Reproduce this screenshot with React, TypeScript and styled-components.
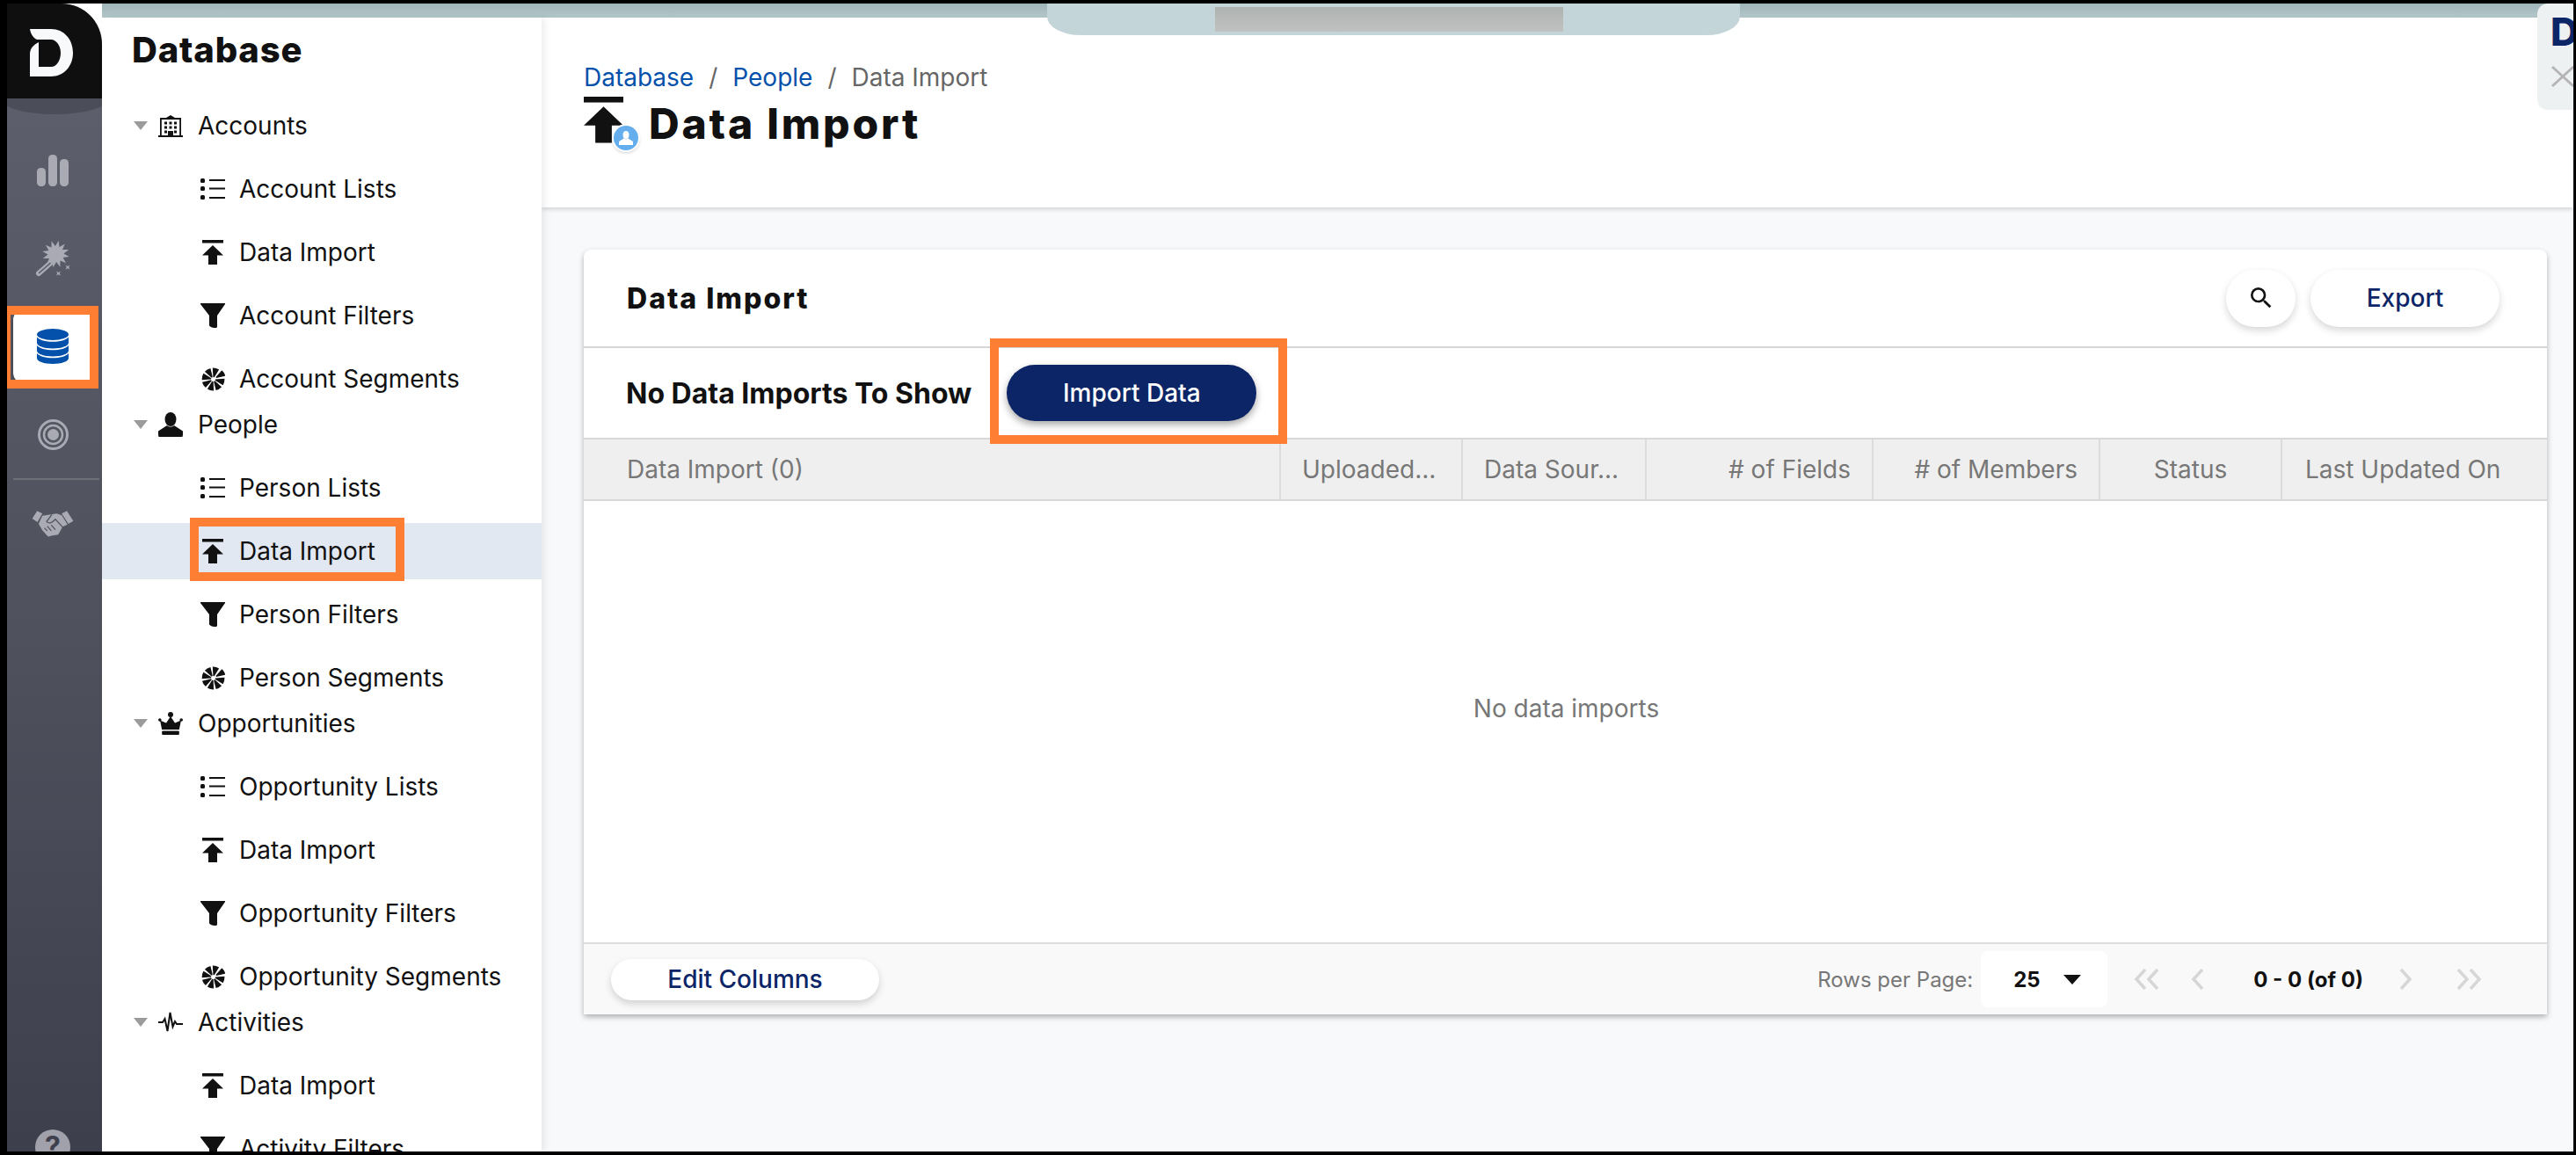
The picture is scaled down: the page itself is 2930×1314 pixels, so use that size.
import React from 'react';
import styled, { createGlobalStyle } from 'styled-components';
import { MdSearch } from 'react-icons/md';

const GlobalStyle = createGlobalStyle`
  html, body {
    margin: 0;
    height: 100%;
    background: #000;
    overflow: hidden;
  }
  #root {
    height: 100%;
  }
  * {
    box-sizing: border-box;
  }
`;

const Frame = styled.div`
  height: 1314px;
  padding: 4px 3px 4px 8px;
  display: flex;
  font-family: Inter, 'Liberation Sans', sans-serif;
  color: #111;
  background: #000;
`;

const Rail = styled.nav`
  width: 108px;
  flex-shrink: 0;
  display: flex;
  flex-direction: column;
  background: #fff;
`;

const LogoBlock = styled.div`
  height: 108px;
  flex-shrink: 0;
  background: #0f0f0f;
  border-top-right-radius: 46px;
  display: flex;
  align-items: center;
  justify-content: center;
  padding: 4px 6px 0 0;
  position: relative;
  z-index: 1;
`;

const RailBody = styled.div`
  flex: 1;
  min-height: 0;
  overflow: hidden;
  position: relative;
  display: flex;
  flex-direction: column;
  padding: 32px 4px 0 0;
  background: linear-gradient(180deg, #5c5f6b 0%, #4f515d 50%, #3e3f4d 100%);

  &::before {
    content: '';
    position: absolute;
    left: -10px;
    right: -10px;
    top: -22px;
    height: 40px;
    border-radius: 50%;
    background: #4b4e59;
  }
`;

const RailItem = styled.div<{ $active?: boolean }>`
  height: 100px;
  flex-shrink: 0;
  position: relative;
  display: flex;
  align-items: center;
  justify-content: center;
  color: #a9aab3;

  ${(p) =>
    p.$active &&
    `
    &::before {
      content: '';
      position: absolute;
      left: 7px;
      right: 4px;
      top: 8px;
      bottom: 8px;
      background: #fff;
      border-radius: 12px;
      box-shadow: 0 3px 4px rgba(0, 0, 0, 0.35);
    }
    & > svg {
      position: relative;
    }
  `}
`;

const RailDivider = styled.div`
  height: 2px;
  flex-shrink: 0;
  margin: 0 -1px 0 7px;
  background: #6d6f79;
`;

const HelpBubble = styled.div`
  width: 40px;
  height: 40px;
  flex-shrink: 0;
  margin: auto auto -15px;
  border-radius: 50%;
  background: #a0a1ab;
  color: #3f404d;
  font-size: 32px;
  font-weight: 700;
  line-height: 40px;
  text-align: center;
`;

const OrangeFrame = styled.span`
  position: absolute;
  border: 10px solid #fe7f34;
  pointer-events: none;
  z-index: 3;
`;

const RailMark = styled(OrangeFrame)`
  left: -6px;
  top: 4px;
  width: 110px;
  height: 94px;
`;

const RowMark = styled(OrangeFrame)`
  left: 100px;
  top: -6px;
  width: 244px;
  height: 72px;
`;

const ButtonMark = styled(OrangeFrame)`
  left: -19px;
  top: -30px;
  width: 338px;
  height: 120px;
`;

const RightSide = styled.div`
  flex: 1;
  min-width: 0;
  display: flex;
  flex-direction: column;
  position: relative;
`;

const TopStrip = styled.div`
  height: 16px;
  flex-shrink: 0;
  background: linear-gradient(180deg, #9fb4b9 0%, #b4c8cb 100%);
`;

const Notch = styled.div`
  position: absolute;
  left: 1075px;
  top: 0;
  width: 788px;
  height: 36px;
  background: #c3d5d8;
  border-radius: 0 0 38px 38px / 0 0 21px 21px;
  z-index: 2;
`;

const NotchBlur = styled.div`
  position: absolute;
  left: 191px;
  top: 4px;
  width: 396px;
  height: 28px;
  background: linear-gradient(180deg, #aeb2b1 0%, #c0c2c1 100%);
`;

const SideTab = styled.div`
  position: absolute;
  right: 0;
  top: 0;
  width: 41px;
  height: 121px;
  overflow: hidden;
  background: #eef1f2;
  border-radius: 12px 0 0 12px;
  padding: 10px 0 0 15px;
  z-index: 2;
  color: #b5b5b5;
`;

const SideTabLetter = styled.div`
  font-size: 44px;
  line-height: 44px;
  font-weight: 800;
  color: #0c2566;
  margin-bottom: 16px;
`;

const Columns = styled.div`
  flex: 1;
  min-height: 0;
  display: flex;
`;

const Sidebar = styled.aside`
  width: 500px;
  flex-shrink: 0;
  overflow: hidden;
  background: #fff;
  padding-top: 16px;
  box-shadow: 3px 0 8px rgba(0, 0, 0, 0.08);
  position: relative;
  z-index: 1;
`;

const SidebarTitle = styled.h2`
  margin: 0 0 49px 34px;
  font-size: 40px;
  line-height: 42px;
  font-weight: 800;
  letter-spacing: 0.8px;
`;

const Tree = styled.div`
  display: flex;
  flex-direction: column;
  gap: 4px;
`;

const GroupHeader = styled.div`
  height: 32px;
  margin-bottom: 24px;
  padding-left: 36px;
  display: flex;
  align-items: center;
  font-size: 28px;
  white-space: nowrap;

  & > svg:nth-child(2) {
    margin: 0 17px 0 12px;
  }
`;

const ChildList = styled.div`
  display: flex;
  flex-direction: column;
  gap: 8px;
`;

const ChildRow = styled.div<{ $selected?: boolean }>`
  height: 64px;
  padding-left: 112px;
  display: flex;
  align-items: center;
  gap: 16px;
  position: relative;
  font-size: 28px;
  white-space: nowrap;
  background: ${(p) => (p.$selected ? '#e1e8f2' : 'transparent')};
`;

const ChildIcon = styled.span`
  width: 28px;
  flex-shrink: 0;
  display: flex;
  justify-content: center;
`;

const Main = styled.main`
  flex: 1;
  min-width: 0;
  display: flex;
  flex-direction: column;
  background: #f8f9fb;
`;

const PageHeader = styled.header`
  height: 216px;
  flex-shrink: 0;
  background: #fff;
  padding: 48px 48px 0;
  box-shadow: 0 2px 5px rgba(0, 0, 0, 0.16);
`;

const Breadcrumbs = styled.div`
  display: flex;
  align-items: center;
  height: 40px;
  gap: 17px;
  font-size: 28px;
  color: #666;
`;

const Crumb = styled.a`
  color: #0451ab;
`;

const TitleRow = styled.div`
  display: flex;
  align-items: center;
  height: 60px;
  margin-top: -3px;
  gap: 14px;
`;

const TitleIconWrap = styled.div`
  position: relative;
  width: 60px;
  height: 55px;
  flex-shrink: 0;
  margin-top: 5px;
`;

const TitleBadge = styled.span`
  position: absolute;
  left: 34px;
  top: 33px;
  width: 28px;
  height: 28px;
  border-radius: 50%;
  background: #64aeee;
  box-shadow: 0 0 0 2px #fff, 0 2px 4px rgba(0, 0, 0, 0.3);
  display: flex;
  align-items: center;
  justify-content: center;
`;

const PageTitle = styled.h1`
  margin: 10px 0 0;
  font-size: 48px;
  font-weight: 800;
  letter-spacing: 2.800px;
  white-space: nowrap;
`;

const Content = styled.div`
  flex: 1;
  padding: 48px 30px 0 48px;
`;

const Card = styled.section`
  height: 870px;
  display: flex;
  flex-direction: column;
  background: #fff;
  border-radius: 8px 8px 2px 2px;
  box-shadow: 0 3px 6px rgba(0, 0, 0, 0.3);
`;

const CardTop = styled.div`
  height: 112px;
  flex-shrink: 0;
  padding: 0 54px 0 49px;
  display: flex;
  align-items: center;
  border-bottom: 2px solid #d6d6d6;
`;

const CardTitle = styled.h3`
  margin: 0 auto 0 0;
  font-size: 32px;
  font-weight: 800;
  letter-spacing: 2px;
`;

const PillButton = styled.button`
  height: 65px;
  border: none;
  border-radius: 33px;
  background: #fff;
  color: #0c2566;
  font-family: inherit;
  font-size: 28px;
  font-weight: 500;
  box-shadow: 0 4px 9px rgba(0, 0, 0, 0.16);
  display: flex;
  align-items: center;
  justify-content: center;
`;

const SearchButton = styled(PillButton)`
  width: 79px;
  margin-right: 17px;
  color: #111;
`;

const ExportButton = styled(PillButton)`
  width: 215px;
`;

const EmptyRow = styled.div`
  height: 102px;
  flex-shrink: 0;
  padding-left: 48px;
  display: flex;
  align-items: center;
  gap: 40px;
`;

const EmptyTitle = styled.div`
  font-size: 32px;
  font-weight: 700;
  white-space: nowrap;
`;

const ButtonSlot = styled.div`
  position: relative;
`;

const ImportButton = styled.button`
  width: 284px;
  height: 64px;
  border: none;
  border-radius: 32px;
  background: #0c2566;
  color: #fff;
  font-family: inherit;
  font-size: 28px;
  font-weight: 500;
  box-shadow: 0 4px 8px rgba(0, 0, 0, 0.35);
`;

const TableHead = styled.div`
  height: 72px;
  flex-shrink: 0;
  display: grid;
  grid-template-columns: 791px 207px 209px 258px 258px 207px 303px;
  background: #efefef;
  border-top: 2px solid #d8d8d8;
  border-bottom: 2px solid #d8d8d8;
`;

const HeadCell = styled.div<{ $align?: string; $pad?: number }>`
  display: flex;
  align-items: center;
  justify-content: ${(p) => p.$align || 'flex-start'};
  padding: 0 24px 0 ${(p) => p.$pad ?? 24}px;
  font-size: 28px;
  color: #777;
  white-space: nowrap;
  border-left: 2px solid #dcdcdc;

  &:first-child {
    border-left: none;
  }
`;

const TableBody = styled.div`
  flex: 1;
  display: flex;
  align-items: center;
  justify-content: center;
  padding: 0 0 30px 2px;
  font-size: 28px;
  color: #777;
`;

const CardFooter = styled.div`
  height: 82px;
  flex-shrink: 0;
  display: flex;
  align-items: center;
  padding: 0 74px 0 31px;
  background: #f9f9f9;
  border-top: 2px solid #ddd;
`;

const EditColumns = styled(PillButton)`
  width: 305px;
  height: 47px;
  margin-right: auto;
`;

const RowsLabel = styled.span`
  font-size: 24px;
  color: #777;
  white-space: nowrap;
`;

const RowsSelect = styled.div`
  width: 144px;
  height: 64px;
  margin-left: 9px;
  padding: 0 30px 0 37px;
  display: flex;
  align-items: center;
  justify-content: space-between;
  background: #fff;
  border-radius: 8px;
  font-size: 24px;
  font-weight: 700;
`;

const PageArrow = styled.svg<{ $gap: number }>`
  margin-left: ${(p) => p.$gap}px;
  flex-shrink: 0;
`;

const PageCount = styled.span<{ $gap: number }>`
  margin-left: ${(p) => p.$gap}px;
  font-size: 24px;
  font-weight: 700;
  white-space: nowrap;
`;

/* ---- drawings ---- */

const LogoMark = () => (
  <svg width="50" height="56" viewBox="36 28 50 56" fill="#f8f9fb">
    <path d="M36 29H60C75 29 85 41 85 56C85 72 74 83 60 83H36V58C36 51 40 47 46 44V72H60C67 72 71 64 71 56C71 48 66 41 60 41H44C40 39 37 35 36 29Z" />
  </svg>
);

const ChartIcon = () => (
  <svg width="36" height="36" viewBox="0 0 36 36" fill="currentColor">
    <rect x="0" y="15" width="10" height="21" rx="4.500" />
    <rect x="13" y="0" width="10" height="36" rx="4.500" />
    <rect x="26" y="5" width="10" height="31" rx="4.500" />
  </svg>
);

const starPoints = Array.from({ length: 24 }, (_, i) => {
  const r = i % 2 === 0 ? 15.500 : 9;
  const a = (i * Math.PI) / 12 + 0.2;
  return `${(23.500 + r * Math.sin(a)).toFixed(1)},${(15 - r * Math.cos(a)).toFixed(1)}`;
}).join(' ');

const WandIcon = () => (
  <svg width="40" height="41" viewBox="0 0 40 41" fill="currentColor">
    <polygon points={starPoints} />
    <path d="M4 37L20 23" stroke="currentColor" strokeWidth="6" strokeLinecap="round" />
    <path d="M4.500 36.500L17 25.500" stroke="#585b66" strokeWidth="1.500" strokeLinecap="round" />
    <path d="M24 34.500L26.500 36L29 34.500L27.700 37L29 39.500L26.500 38.200L24 39.500L25.300 37ZM34.500 27.500L37 29L39.500 27.500L38.200 30L39.500 32.500L37 31.200L34.500 32.500L35.800 30Z" />
  </svg>
);

const DatabaseIcon = () => (
  <svg width="36" height="40" viewBox="0 0 36 40" fill="#0451ab">
    <ellipse cx="18" cy="6.500" rx="18" ry="6.500" />
    <path d="M0 9.500C3 13 10 14.800 18 14.800C26 14.800 33 13 36 9.500V16C36 19.600 28 22.500 18 22.500C8 22.500 0 19.600 0 16Z" />
    <path d="M0 19C3 22.500 10 24.300 18 24.300C26 24.300 33 22.500 36 19V25C36 28.600 28 31.500 18 31.500C8 31.500 0 28.600 0 25Z" />
    <path d="M0 28C3 31.500 10 33.300 18 33.300C26 33.300 33 31.500 36 28V33.500C36 37.100 28 40 18 40C8 40 0 37.100 0 33.500Z" />
  </svg>
);

const TargetIcon = () => (
  <svg width="35" height="35" viewBox="0 0 35 35" fill="none" stroke="currentColor">
    <circle cx="17.500" cy="17.500" r="16" strokeWidth="3" />
    <circle cx="17.500" cy="17.500" r="10.500" strokeWidth="2.500" />
    <circle cx="17.500" cy="17.500" r="6.500" fill="currentColor" stroke="none" />
  </svg>
);

const HandshakeIcon = () => (
  <svg width="48" height="32" viewBox="18 30 146 96" fill="currentColor">
    <path d="M20 60L37 33L55 42L38 72Z" />
    <path d="M122 42L140 33L162 68L145 78Z" />
    <path d="M55 50L85 45L105 42L122 48L142 80L125 88L110 115L90 118L75 122L55 100L42 78Z" />
    <path d="M88 46L70 70C76 78 88 76 100 62L128 92M62 92L72 102M72 86L86 102M86 82L100 98" fill="none" stroke="#52545f" strokeWidth="4" />
  </svg>
);

const Caret = () => (
  <svg width="16" height="10" viewBox="0 0 16 10" fill="#9b9b9b">
    <path d="M0 0H16L8 10Z" />
  </svg>
);

const BuildingIcon = () => (
  <svg width="28" height="25" viewBox="0 0 28 25" fill="#111">
    <path d="M2 3H9L14 0L19 3H26V23H28V25H0V23H2ZM3.800 5V23H11V18H17V23H24.200V5Z" />
    <path d="M7 7.500h3v3H7zM12.500 7.500h3v3h-3zM18 7.500h3v3h-3zM7 12.500h3v3H7zM12.500 12.500h3v3h-3zM18 12.500h3v3h-3zM7 17.500h3v3H7zM18 17.500h3v3h-3z" />
  </svg>
);

const PersonIcon = () => (
  <svg width="28" height="28" viewBox="0 0 28 28" fill="#111">
    <ellipse cx="14" cy="8" rx="6.500" ry="8" />
    <path d="M10 15L0 21.500C-.3 24 0 26 .5 28H27.500C28 26 28.300 24 28 21.500L18 15C16 17 12 17 10 15Z" />
  </svg>
);

const CrownIcon = () => (
  <svg width="28" height="26" viewBox="0 0 28 26" fill="#111">
    <circle cx="14" cy="3" r="3" />
    <circle cx="1.800" cy="9" r="1.800" />
    <circle cx="26.200" cy="9" r="1.800" />
    <path d="M14 5L19 12.500L26 9.500L23.800 20H4.200L2 9.500L9 12.500Z" />
    <rect x="4.200" y="21.500" width="19.600" height="4.500" rx="1" />
  </svg>
);

const PulseIcon = () => (
  <svg width="28" height="24" viewBox="0 0 28 24" fill="none" stroke="#111" strokeWidth="2">
    <path d="M0 12H5L7.500 8L10.500 22L13.500 1L16.500 17L19 11L21 14H28" />
  </svg>
);

const ListIcon = () => (
  <svg width="28" height="24" viewBox="0 0 28 24" fill="#111">
    <rect x="0" y="0" width="5" height="5" rx="1.500" />
    <rect x="0" y="9" width="5" height="5" rx="1.500" />
    <rect x="0" y="19" width="5" height="5" rx="1.500" />
    <rect x="10" y="1" width="18" height="2" />
    <rect x="10" y="10.500" width="18" height="2" />
    <rect x="10" y="21" width="18" height="2" />
  </svg>
);

const ImportIcon = ({ size = 24 }: { size?: number }) => (
  <svg width={size} height={(size * 28) / 24} viewBox="0 0 24 28" fill="#111">
    <rect x="0" y="0" width="24" height="3.500" />
    <path d="M12 6L24 17.500H17V28H7V17.500H0Z" />
  </svg>
);

const FilterIcon = () => (
  <svg width="28" height="28" viewBox="0 0 28 28" fill="#111">
    <path d="M0 0H28V1L19 14V26.500C19 27.800 18 28 17 28C13 28 10 26.500 10 25V14L0 1Z" />
  </svg>
);

const SegmentIcon = () => {
  const spokes = [0, 45, 90, 135, 180, 225, 270, 315];
  return (
    <svg width="27" height="27" viewBox="-14 -14 28 28" fill="#111">
      {spokes.map((deg) => (
        <path
          key={deg}
          d="M-.7 -2.500L-3.900 -12.800A13.500 13.500 0 0 1 3.900 -12.800L.7 -2.500Z"
          transform={`rotate(${deg + 14})${deg === 45 ? ' translate(0 -1.500)' : ''}`}
        />
      ))}
    </svg>
  );
};

const ItemIcons: Record<string, React.ReactNode> = {
  list: <ListIcon />,
  import: <ImportIcon />,
  filter: <FilterIcon />,
  segment: <SegmentIcon />,
};

const Chevron = ({ gap, double, flip }: { gap: number; double?: boolean; flip?: boolean }) => (
  <PageArrow $gap={gap} width={double ? 29 : 15} height="24" viewBox={double ? '0 0 29 24' : '0 0 15 24'} fill="none" stroke="#d6d6d6" strokeWidth="3.500">
    <g transform={flip ? `translate(${double ? 29 : 15} 0) scale(-1 1)` : undefined}>
      <path d="M13 1L3 12L13 23" />
      {double && <path d="M27 1L17 12L27 23" />}
    </g>
  </PageArrow>
);

const XMark = () => (
  <svg width="30" height="26" viewBox="0 0 30 26" stroke="currentColor" strokeWidth="3">
    <path d="M2 2L26 24M26 2L2 24" />
  </svg>
);

const tree = [
  {
    name: 'Accounts',
    icon: <BuildingIcon />,
    items: [
      { kind: 'list', label: 'Account Lists' },
      { kind: 'import', label: 'Data Import' },
      { kind: 'filter', label: 'Account Filters' },
      { kind: 'segment', label: 'Account Segments' },
    ],
  },
  {
    name: 'People',
    icon: <PersonIcon />,
    items: [
      { kind: 'list', label: 'Person Lists' },
      { kind: 'import', label: 'Data Import', selected: true },
      { kind: 'filter', label: 'Person Filters' },
      { kind: 'segment', label: 'Person Segments' },
    ],
  },
  {
    name: 'Opportunities',
    icon: <CrownIcon />,
    items: [
      { kind: 'list', label: 'Opportunity Lists' },
      { kind: 'import', label: 'Data Import' },
      { kind: 'filter', label: 'Opportunity Filters' },
      { kind: 'segment', label: 'Opportunity Segments' },
    ],
  },
  {
    name: 'Activities',
    icon: <PulseIcon />,
    items: [
      { kind: 'import', label: 'Data Import' },
      { kind: 'filter', label: 'Activity Filters' },
    ],
  },
];

const App = () => (
  <Frame>
    <GlobalStyle />
    <Rail>
      <LogoBlock>
        <LogoMark />
      </LogoBlock>
      <RailBody>
        <RailItem>
          <ChartIcon />
        </RailItem>
        <RailItem>
          <WandIcon />
        </RailItem>
        <RailItem $active>
          <DatabaseIcon />
          <RailMark />
        </RailItem>
        <RailItem>
          <TargetIcon />
        </RailItem>
        <RailDivider />
        <RailItem>
          <HandshakeIcon />
        </RailItem>
        <HelpBubble>?</HelpBubble>
      </RailBody>
    </Rail>

    <RightSide>
      <TopStrip />
      <Notch>
        <NotchBlur />
      </Notch>
      <SideTab>
        <SideTabLetter>D</SideTabLetter>
        <XMark />
      </SideTab>
      <Columns>
        <Sidebar>
          <SidebarTitle>Database</SidebarTitle>
          <Tree>
            {tree.map((group) => (
              <div key={group.name}>
                <GroupHeader>
                  <Caret />
                  {group.icon}
                  {group.name}
                </GroupHeader>
                <ChildList>
                  {group.items.map((item) => (
                    <ChildRow key={item.label} $selected={item.selected}>
                      <ChildIcon>{ItemIcons[item.kind]}</ChildIcon>
                      {item.label}
                      {item.selected && <RowMark />}
                    </ChildRow>
                  ))}
                </ChildList>
              </div>
            ))}
          </Tree>
        </Sidebar>

        <Main>
          <PageHeader>
            <Breadcrumbs>
              <Crumb>Database</Crumb>
              <span>/</span>
              <Crumb>People</Crumb>
              <span>/</span>
              <span>Data Import</span>
            </Breadcrumbs>
            <TitleRow>
              <TitleIconWrap>
                <ImportIcon size={45} />
                <TitleBadge>
                  <svg width="16" height="16" viewBox="0 0 16 16" fill="#fff">
                    <ellipse cx="8" cy="4.500" rx="3.500" ry="4.500" />
                    <path d="M5.500 8.500L0 12V16H16V12L10.500 8.500C9.500 9.500 6.500 9.500 5.500 8.500Z" />
                  </svg>
                </TitleBadge>
              </TitleIconWrap>
              <PageTitle>Data Import</PageTitle>
            </TitleRow>
          </PageHeader>

          <Content>
            <Card>
              <CardTop>
                <CardTitle>Data Import</CardTitle>
                <SearchButton>
                  <MdSearch size={32} />
                </SearchButton>
                <ExportButton>Export</ExportButton>
              </CardTop>
              <EmptyRow>
                <EmptyTitle>No Data Imports To Show</EmptyTitle>
                <ButtonSlot>
                  <ImportButton>Import Data</ImportButton>
                  <ButtonMark />
                </ButtonSlot>
              </EmptyRow>
              <TableHead>
                <HeadCell $pad={49}>Data Import (0)</HeadCell>
                <HeadCell>Uploaded...</HeadCell>
                <HeadCell>Data Sour...</HeadCell>
                <HeadCell $align="flex-end">
                  # of Fields
                </HeadCell>
                <HeadCell $align="flex-end">
                  # of Members
                </HeadCell>
                <HeadCell $align="center">
                  Status
                </HeadCell>
                <HeadCell $pad={26}>Last Updated On</HeadCell>
              </TableHead>
              <TableBody>No data imports</TableBody>
              <CardFooter>
                <EditColumns>Edit Columns</EditColumns>
                <RowsLabel>Rows per Page:</RowsLabel>
                <RowsSelect>
                  25
                  <svg width="20" height="11" viewBox="0 0 20 11" fill="#111">
                    <path d="M0 0H20L10 11Z" />
                  </svg>
                </RowsSelect>
                <Chevron gap={30} double />
                <Chevron gap={36} />
                <PageCount $gap={56}>0 - 0 (of 0)</PageCount>
                <Chevron gap={41} flip />
                <Chevron gap={50} double flip />
              </CardFooter>
            </Card>
          </Content>
        </Main>
      </Columns>
    </RightSide>
  </Frame>
);

export default App;
